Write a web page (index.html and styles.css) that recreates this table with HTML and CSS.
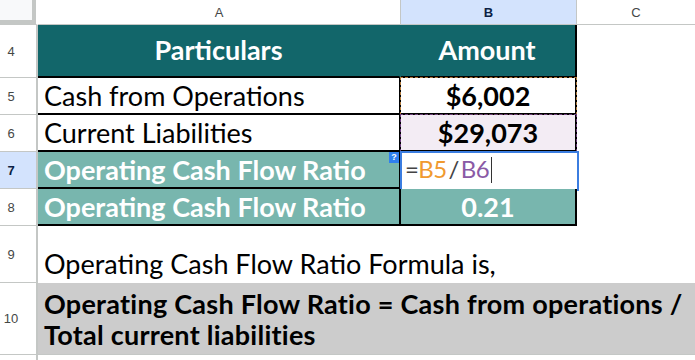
FILE: index.html
```html
<!DOCTYPE html>
<html>
<head>
<meta charset="utf-8">
<link rel="stylesheet" href="styles.css">
</head>
<body>
<div class="sheet">
  <div class="corner"><div class="corner-box"></div></div>
  <div class="colhead">A</div>
  <div class="colhead sel">B</div>
  <div class="colhead last">C</div>

  <div class="rowhead">4</div>
  <div class="cell a head">Particulars</div>
  <div class="cell b head">Amount</div>
  <div class="cell c"></div>

  <div class="rowhead">5</div>
  <div class="cell a body">Cash from Operations</div>
  <div class="cell b body num ref-orange">$6,002</div>
  <div class="cell c"></div>

  <div class="rowhead">6</div>
  <div class="cell a body">Current Liabilities</div>
  <div class="cell b body num ref-purple">$29,073</div>
  <div class="cell c"></div>

  <div class="rowhead sel">7</div>
  <div class="cell a light">Operating Cash Flow Ratio<span class="badge">?</span></div>
  <div class="cell b edit"><span class="op">=</span><span class="r1">B5</span><span class="op slash">/</span><span class="r2">B6</span><span class="caret"></span></div>
  <div class="cell c"></div>

  <div class="rowhead">8</div>
  <div class="cell a light">Operating Cash Flow Ratio</div>
  <div class="cell b light num">0.21</div>
  <div class="cell c"></div>

  <div class="rowhead">9</div>
  <div class="cell wide plain">Operating Cash Flow Ratio Formula is,</div>

  <div class="rowhead">10</div>
  <div class="cell wide grey">Operating Cash Flow Ratio = Cash from operations /<br>Total current liabilities</div>

  <div class="rowhead end"></div>
  <div class="cell wide tail"></div>
</div>
</body>
</html>
```
FILE: styles.css
```css
* { box-sizing: border-box; }
html, body { margin: 0; padding: 0; background: #fff; }
body { width: 695px; height: 360px; overflow: hidden; }

.sheet {
  display: grid;
  grid-template-columns: 38px 363px 176px 1fr;
  grid-template-rows: 25px 53px 37px 37px 37px 37px 57px 72px 5px;
  width: 695px;
  height: 360px;
}

.corner { background: #fff; border-bottom: 1px solid #c4c7c5; border-right: 2px solid #fff; }
.corner-box {
  width: 36px; height: 24px;
  background: #f8f9fa;
  border-right: 4px solid #c4c7c5;
  border-bottom: 4px solid #c4c7c5;
}

.colhead {
  font-family: "Liberation Sans", Arial, sans-serif;
  font-size: 13px;
  color: #444746;
  display: flex; align-items: center; justify-content: center;
  border-bottom: 1px solid #c4c7c5;
  border-right: 1px solid #c4c7c5;
  padding-top: 1px;
}
.colhead.sel { background: #d3e3fd; color: #0b1f44; font-weight: bold; }
.colhead.last { border-right: none; }

.rowhead {
  font-family: "Liberation Sans", Arial, sans-serif;
  font-size: 13px;
  color: #444746;
  display: flex; align-items: center; justify-content: center;
  padding-right: 14px;
  border-right: 2px solid #c4c7c5;
  border-bottom: 1px solid #c4c7c5;
}
.rowhead.sel { background: #d3e3fd; color: #0b1f44; font-weight: bold; }
.rowhead.end { border-bottom: none; }

.cell {
  font-family: "Lato", "Open Sans", sans-serif;
  font-size: 27px;
  color: #000;
  white-space: nowrap;
  position: relative;
  display: flex;
  align-items: flex-end;
  padding: 0 0 1px 6px;
  line-height: 1.2;
}
.cell.a { border-right: 2px solid #000; border-bottom: 2px solid #000; }
.cell.b { border-right: 2px solid #000; border-bottom: 2px solid #000; }

.cell.head {
  background: #12666a;
  color: #fff;
  font-weight: bold;
  justify-content: center;
  align-items: center;
  padding: 0;
  border-right-color: #12666a;
}
.cell.b.head { border-right-color: #000; padding-right: 2px; }

.cell.num { justify-content: center; font-weight: bold; padding-left: 0; }

.cell.light {
  background: #78b6ae;
  color: #fff;
  font-weight: bold;
}

.ref-orange::after, .ref-purple::after {
  content: "";
  position: absolute;
  left: -1px; top: -1px; right: -2px; bottom: -2px;
  border: 1px dashed #b07a3c;
}
.ref-purple { background: #f3ecf4; }
.ref-purple::after { border-color: #6a3d7a; }

.cell.edit {
  background: #fff;
  border: 2px solid #3b7de0;
  margin: -1px -2px -2px -1px;
  padding: 0 0 3px 3px;
  font-size: 24px;
  letter-spacing: -0.6px;
  align-items: center;
}
.op { color: #444; }
.slash { padding: 0 2px; }
.r1 { color: #f09a2f; }
.r2 { color: #8a5aa6; }
.caret { display: inline-block; width: 1px; height: 26px; background: #333; margin-left: 2px; }

.badge {
  position: absolute;
  right: 0; top: 0;
  width: 10px; height: 11px;
  background: #2f7ff0;
  color: #fff;
  font-family: "Liberation Sans", Arial, sans-serif;
  font-size: 9px;
  font-weight: bold;
  line-height: 11px;
  letter-spacing: 0;
  text-align: center;
  display: block;
  padding: 0;
}

.cell.wide { grid-column: 2 / 5; }
.cell.plain { padding-bottom: 3px; }
.cell.grey {
  background: #cccccc;
  font-weight: bold;
  white-space: normal;
  align-items: center;
  line-height: 31px;
  letter-spacing: 0.25px;
  padding-top: 1px;
  border-bottom: 1px solid #c4c7c5;
}
```
